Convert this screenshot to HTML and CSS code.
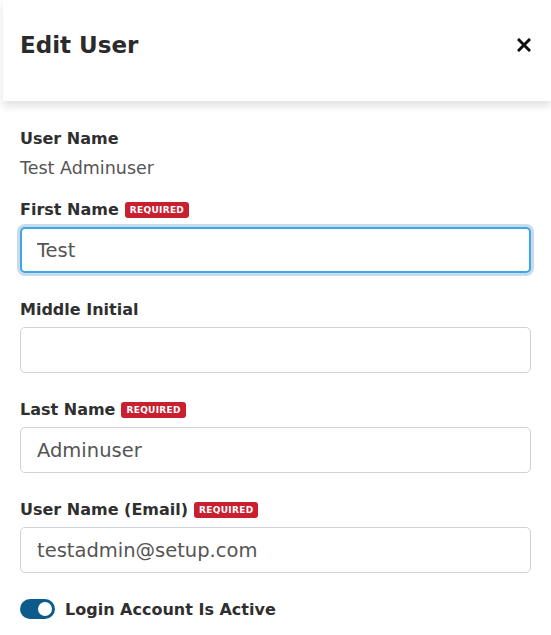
FILE: index.html
```html
<!DOCTYPE html>
<html>
<head>
    <meta charset="UTF-8">
    <meta name="viewport" content="width=device-width, initial-scale=1.0">
    <title>Edit User</title>
    <link rel="stylesheet" href="styles.css">
</head>
<body>
<div class="panel">
    <div class="panel-header">
        <h1 class="panel-title">Edit User</h1>
        <button class="close-btn" aria-label="Close">
            <svg width="14" height="14" viewBox="0 0 14 14">
                <path d="M2 2 L12 12 M12 2 L2 12" stroke="#111" stroke-width="3" stroke-linecap="square"/>
            </svg>
        </button>
    </div>
    <form class="panel-body">
        <div class="field">
            <div class="label">User Name</div>
            <div class="static-value">Test Adminuser</div>
        </div>
        <div class="field">
            <label class="label" for="first-name">First Name <span class="badge">REQUIRED</span></label>
            <input class="text-input focused" id="first-name" type="text" value="Test">
        </div>
        <div class="field">
            <label class="label" for="middle-initial">Middle Initial</label>
            <input class="text-input" id="middle-initial" type="text" value="">
        </div>
        <div class="field">
            <label class="label" for="last-name">Last Name <span class="badge">REQUIRED</span></label>
            <input class="text-input" id="last-name" type="text" value="Adminuser">
        </div>
        <div class="field">
            <label class="label" for="email">User Name (Email) <span class="badge">REQUIRED</span></label>
            <input class="text-input" id="email" type="text" value="testadmin@setup.com">
        </div>
        <div class="toggle-row">
            <span class="toggle on"><span class="knob"></span></span>
            <span class="toggle-label">Login Account Is Active</span>
        </div>
    </form>
</div>
</body>
</html>
```

FILE: styles.css
```css
html, body {
    margin: 0;
    padding: 0;
    background-color: #fff;
    font-family: "DejaVu Sans", "Noto Sans", sans-serif;
    color: #333;
}

.panel {
    margin-left: 3px;
}

.panel-header {
    height: 101px;
    box-sizing: border-box;
    display: flex;
    align-items: center;
    justify-content: space-between;
    padding: 0 20px 12px 17px;
    background-color: #fff;
    box-shadow: 0 5px 8px rgba(0, 0, 0, 0.12);
    position: relative;
}

.panel-title {
    margin: 0;
    font-size: 23px;
    font-weight: bold;
    color: #2b2b2b;
}

.close-btn {
    border: none;
    background: none;
    padding: 0;
    display: flex;
    cursor: pointer;
}

.panel-body {
    padding: 27px 20px 20px 17px;
}

.field {
    margin-bottom: 26px;
}

.field:first-child {
    margin-bottom: 21px;
}

.label {
    display: flex;
    align-items: center;
    gap: 6px;
    height: 20px;
    font-size: 16px;
    font-weight: bold;
    color: #2f2f2f;
    margin-bottom: 8px;
}

.static-value {
    font-size: 17.5px;
    line-height: 20px;
    color: #555;
    margin-top: 10px;
}

.badge {
    background-color: #c8202f;
    color: #fff;
    font-size: 9px;
    font-weight: bold;
    letter-spacing: 0.3px;
    padding: 3px 5px;
    border-radius: 3px;
    line-height: 10px;
    margin-top: 2px;
}

.text-input {
    display: block;
    box-sizing: border-box;
    width: 100%;
    height: 46px;
    border: 1px solid #ccd3db;
    border-radius: 5px;
    padding: 0 16px;
    font-family: inherit;
    font-size: 19.5px;
    color: #555;
    outline: none;
}

.text-input.focused {
    border: 2px solid #3aa8f0;
    box-shadow: 0 0 0 3px #c9dbe6;
    padding: 0 15px;
}

.toggle-row {
    display: flex;
    align-items: center;
    gap: 10px;
    margin-top: 6px;
}

.toggle {
    width: 35px;
    height: 20px;
    border-radius: 10px;
    background-color: #0d5a8c;
    display: flex;
    align-items: center;
    justify-content: flex-end;
    padding: 0 3px;
    box-sizing: border-box;
}

.knob {
    width: 14px;
    height: 14px;
    border-radius: 50%;
    background-color: #fff;
}

.toggle-label {
    font-size: 16px;
    font-weight: bold;
    color: #2f2f2f;
}
```
